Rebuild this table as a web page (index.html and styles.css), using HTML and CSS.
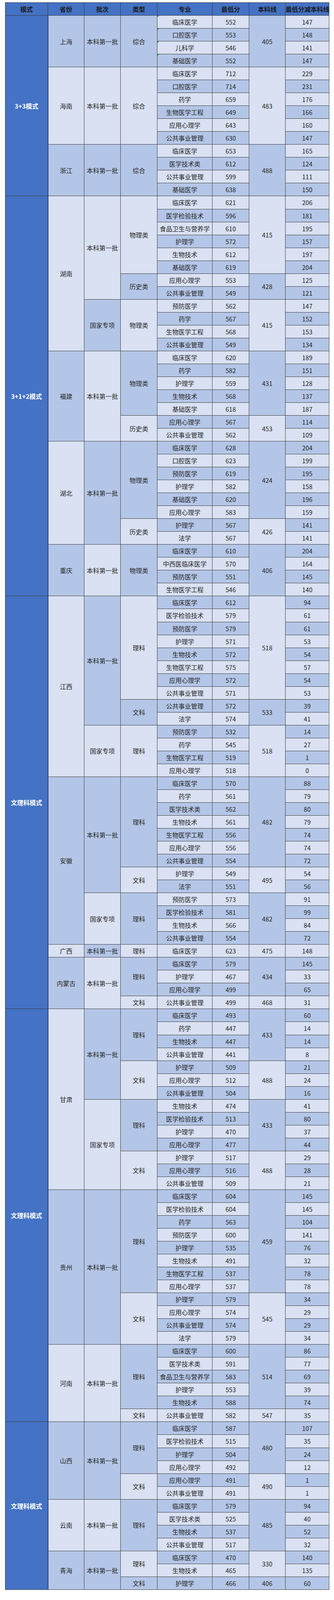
FILE: index.html
```html
<!DOCTYPE html>
<html lang="zh-CN">
<head>
<meta charset="utf-8">
<title>录取分数</title>
<link rel="stylesheet" href="styles.css">
</head>
<body>
<div class="wrap">
<table class="t">
<colgroup>
<col class="c-mode"><col class="c-prov"><col class="c-batch"><col class="c-type"><col class="c-major"><col class="c-min"><col class="c-line"><col class="c-diff">
</colgroup>
<thead>
<tr><th>模式</th><th>省份</th><th>批次</th><th>类型</th><th>专业</th><th>最低分</th><th>本科线</th><th>最低分减本科线</th></tr>
</thead>
<tbody>
<tr class="o"><td class="mode" rowspan="14">3+3模式</td><td class="b" rowspan="4">上海</td><td class="b" rowspan="4">本科第一批</td><td class="b" rowspan="4">综合</td><td class="tri">临床医学</td><td>552</td><td class="b" rowspan="4">405</td><td>147</td></tr>
<tr class="e"><td class="tri">口腔医学</td><td>553</td><td>148</td></tr>
<tr class="o"><td class="tri">儿科学</td><td>546</td><td>141</td></tr>
<tr class="e"><td class="tri">基础医学</td><td>552</td><td>147</td></tr>
<tr class="o"><td class="a" rowspan="6">海南</td><td class="a" rowspan="6">本科第一批</td><td class="a" rowspan="6">综合</td><td>临床医学</td><td>712</td><td class="a" rowspan="6">483</td><td>229</td></tr>
<tr class="e"><td>口腔医学</td><td>714</td><td>231</td></tr>
<tr class="o"><td>药学</td><td>659</td><td>176</td></tr>
<tr class="e"><td>生物医学工程</td><td>649</td><td>166</td></tr>
<tr class="o"><td>应用心理学</td><td>643</td><td>160</td></tr>
<tr class="e"><td>公共事业管理</td><td>630</td><td>147</td></tr>
<tr class="o"><td class="b" rowspan="4">浙江</td><td class="b" rowspan="4">本科第一批</td><td class="b" rowspan="4">综合</td><td>临床医学</td><td>653</td><td class="b" rowspan="4">488</td><td>165</td></tr>
<tr class="e"><td>医学技术类</td><td>612</td><td>124</td></tr>
<tr class="o"><td>公共事业管理</td><td>599</td><td>111</td></tr>
<tr class="e"><td>基础医学</td><td>638</td><td>150</td></tr>

<tr class="o"><td class="mode" rowspan="31">3+1+2模式</td><td class="a" rowspan="12">湖南</td><td class="a" rowspan="8">本科第一批</td><td class="a" rowspan="6">物理类</td><td>临床医学</td><td>621</td><td class="a" rowspan="6">415</td><td>206</td></tr>
<tr class="e"><td>医学检验技术</td><td>596</td><td>181</td></tr>
<tr class="o"><td>食品卫生与营养学</td><td>610</td><td>195</td></tr>
<tr class="e"><td>护理学</td><td>572</td><td>157</td></tr>
<tr class="o"><td>生物技术</td><td>612</td><td>197</td></tr>
<tr class="e"><td>基础医学</td><td>619</td><td>204</td></tr>
<tr class="o"><td class="b" rowspan="2">历史类</td><td>应用心理学</td><td>553</td><td class="b" rowspan="2">428</td><td>125</td></tr>
<tr class="e"><td>公共事业管理</td><td>549</td><td>121</td></tr>
<tr class="o"><td class="b" rowspan="4">国家专项</td><td class="a" rowspan="4">物理类</td><td>预防医学</td><td>562</td><td class="a" rowspan="4">415</td><td>147</td></tr>
<tr class="e"><td>药学</td><td>567</td><td>152</td></tr>
<tr class="o"><td>生物医学工程</td><td>568</td><td>153</td></tr>
<tr class="e"><td>公共事业管理</td><td>549</td><td>134</td></tr>
<tr class="o"><td class="b" rowspan="7">福建</td><td class="a" rowspan="7">本科第一批</td><td class="b" rowspan="5">物理类</td><td>临床医学</td><td>620</td><td class="b" rowspan="5">431</td><td>189</td></tr>
<tr class="e"><td>药学</td><td>582</td><td>151</td></tr>
<tr class="o"><td>护理学</td><td>559</td><td>128</td></tr>
<tr class="e"><td>生物技术</td><td>568</td><td>137</td></tr>
<tr class="o"><td>基础医学</td><td>618</td><td>187</td></tr>
<tr class="e"><td class="a" rowspan="2">历史类</td><td>应用心理学</td><td>567</td><td class="a" rowspan="2">453</td><td>114</td></tr>
<tr class="o"><td>公共事业管理</td><td>562</td><td>109</td></tr>
<tr class="e"><td class="a" rowspan="8">湖北</td><td class="b" rowspan="8">本科第一批</td><td class="b" rowspan="6">物理类</td><td>临床医学</td><td>628</td><td class="b" rowspan="6">424</td><td>204</td></tr>
<tr class="o"><td>口腔医学</td><td>623</td><td>199</td></tr>
<tr class="e"><td>预防医学</td><td>619</td><td>195</td></tr>
<tr class="o"><td>护理学</td><td>582</td><td>158</td></tr>
<tr class="e"><td>基础医学</td><td>620</td><td>196</td></tr>
<tr class="o"><td>应用心理学</td><td>583</td><td>159</td></tr>
<tr class="e"><td class="a" rowspan="2">历史类</td><td>护理学</td><td>567</td><td class="a" rowspan="2">426</td><td>141</td></tr>
<tr class="o"><td>法学</td><td>567</td><td>141</td></tr>
<tr class="e"><td class="b" rowspan="4">重庆</td><td class="a" rowspan="4">本科第一批</td><td class="b" rowspan="4">物理类</td><td>临床医学</td><td>610</td><td class="b" rowspan="4">406</td><td>204</td></tr>
<tr class="o"><td>中西医临床医学</td><td>570</td><td>164</td></tr>
<tr class="e"><td>预防医学</td><td>551</td><td>145</td></tr>
<tr class="o"><td>生物医学工程</td><td>546</td><td>140</td></tr>

<tr class="e"><td class="mode" rowspan="32">文理科模式</td><td class="a" rowspan="14">江西</td><td class="b" rowspan="10">本科第一批</td><td class="a" rowspan="8">理科</td><td>临床医学</td><td>612</td><td class="a" rowspan="8">518</td><td>94</td></tr>
<tr class="o"><td>医学检验技术</td><td>579</td><td>61</td></tr>
<tr class="e"><td>预防医学</td><td>579</td><td>61</td></tr>
<tr class="o"><td>护理学</td><td>571</td><td>53</td></tr>
<tr class="e"><td>生物技术</td><td>572</td><td>54</td></tr>
<tr class="o"><td>生物医学工程</td><td>575</td><td>57</td></tr>
<tr class="e"><td>应用心理学</td><td>572</td><td>54</td></tr>
<tr class="o"><td>公共事业管理</td><td>571</td><td>53</td></tr>
<tr class="e"><td class="b" rowspan="2">文科</td><td>公共事业管理</td><td>572</td><td class="b" rowspan="2">533</td><td>39</td></tr>
<tr class="o"><td>法学</td><td>574</td><td>41</td></tr>
<tr class="e"><td class="a" rowspan="4">国家专项</td><td class="a" rowspan="4">理科</td><td>预防医学</td><td>532</td><td class="a" rowspan="4">518</td><td>14</td></tr>
<tr class="o"><td>药学</td><td>545</td><td>27</td></tr>
<tr class="e"><td>生物医学工程</td><td>519</td><td>1</td></tr>
<tr class="o"><td>应用心理学</td><td>518</td><td>0</td></tr>
<tr class="e"><td class="b" rowspan="13">安徽</td><td class="b" rowspan="9">本科第一批</td><td class="b" rowspan="7">理科</td><td>临床医学</td><td>570</td><td class="b" rowspan="7">482</td><td>88</td></tr>
<tr class="o"><td>药学</td><td>561</td><td>79</td></tr>
<tr class="e"><td>医学技术类</td><td>562</td><td>80</td></tr>
<tr class="o"><td>生物技术</td><td>561</td><td>79</td></tr>
<tr class="e"><td>生物医学工程</td><td>556</td><td>74</td></tr>
<tr class="o"><td>应用心理学</td><td>556</td><td>74</td></tr>
<tr class="e"><td>公共事业管理</td><td>554</td><td>72</td></tr>
<tr class="o"><td class="a" rowspan="2">文科</td><td>护理学</td><td>549</td><td class="a" rowspan="2">495</td><td>54</td></tr>
<tr class="e"><td>法学</td><td>551</td><td>56</td></tr>
<tr class="o"><td class="a" rowspan="4">国家专项</td><td class="b" rowspan="4">理科</td><td>预防医学</td><td>573</td><td class="b" rowspan="4">482</td><td>91</td></tr>
<tr class="e"><td>医学检验技术</td><td>581</td><td>99</td></tr>
<tr class="o"><td>生物技术</td><td>566</td><td>84</td></tr>
<tr class="e"><td>公共事业管理</td><td>554</td><td>72</td></tr>
<tr class="o"><td class="a">广西</td><td class="b">本科第一批</td><td class="a">理科</td><td>临床医学</td><td>623</td><td class="a">475</td><td>148</td></tr>
<tr class="e"><td class="b" rowspan="4">内蒙古</td><td class="a" rowspan="4">本科第一批</td><td class="b" rowspan="3">理科</td><td>临床医学</td><td>579</td><td class="b" rowspan="3">434</td><td>145</td></tr>
<tr class="o"><td>护理学</td><td>467</td><td>33</td></tr>
<tr class="e"><td>应用心理学</td><td>499</td><td>65</td></tr>
<tr class="o"><td class="a">文科</td><td>公共事业管理</td><td>499</td><td class="a">468</td><td>31</td></tr>

<tr class="e"><td class="mode" rowspan="32">文理科模式</td><td class="a" rowspan="14">甘肃</td><td class="b" rowspan="7">本科第一批</td><td class="b" rowspan="4">理科</td><td>临床医学</td><td>493</td><td class="b" rowspan="4">433</td><td>60</td></tr>
<tr class="o"><td>药学</td><td>447</td><td>14</td></tr>
<tr class="e"><td>生物技术</td><td>447</td><td>14</td></tr>
<tr class="o"><td>公共事业管理</td><td>441</td><td>8</td></tr>
<tr class="e"><td class="a" rowspan="3">文科</td><td>护理学</td><td>509</td><td class="a" rowspan="3">488</td><td>21</td></tr>
<tr class="o"><td>应用心理学</td><td>512</td><td>24</td></tr>
<tr class="e"><td>公共事业管理</td><td>504</td><td>16</td></tr>
<tr class="o"><td class="a" rowspan="7">国家专项</td><td class="b" rowspan="4">理科</td><td>生物技术</td><td>474</td><td class="b" rowspan="4">433</td><td>41</td></tr>
<tr class="e"><td>医学检验技术</td><td>513</td><td>80</td></tr>
<tr class="o"><td>护理学</td><td>470</td><td>37</td></tr>
<tr class="e"><td>应用心理学</td><td>477</td><td>44</td></tr>
<tr class="o"><td class="a" rowspan="3">文科</td><td>护理学</td><td>517</td><td class="a" rowspan="3">488</td><td>29</td></tr>
<tr class="e"><td>应用心理学</td><td>516</td><td>28</td></tr>
<tr class="o"><td>公共事业管理</td><td>509</td><td>21</td></tr>
<tr class="e"><td class="b" rowspan="12">贵州</td><td class="b" rowspan="12">本科第一批</td><td class="b" rowspan="8">理科</td><td>临床医学</td><td>604</td><td class="b" rowspan="8">459</td><td>145</td></tr>
<tr class="o"><td>医学检验技术</td><td>604</td><td>145</td></tr>
<tr class="e"><td>药学</td><td>563</td><td>104</td></tr>
<tr class="o"><td>预防医学</td><td>600</td><td>141</td></tr>
<tr class="e"><td>护理学</td><td>535</td><td>76</td></tr>
<tr class="o"><td>生物技术</td><td>491</td><td>32</td></tr>
<tr class="e"><td>生物医学工程</td><td>537</td><td>78</td></tr>
<tr class="o"><td>应用心理学</td><td>537</td><td>78</td></tr>
<tr class="e"><td class="a" rowspan="4">文科</td><td>护理学</td><td>579</td><td class="a" rowspan="4">545</td><td>34</td></tr>
<tr class="o"><td>应用心理学</td><td>574</td><td>29</td></tr>
<tr class="e"><td>公共事业管理</td><td>574</td><td>29</td></tr>
<tr class="o"><td>法学</td><td>579</td><td>34</td></tr>
<tr class="e"><td class="a" rowspan="6">河南</td><td class="a" rowspan="6">本科第一批</td><td class="b" rowspan="5">理科</td><td>临床医学</td><td>600</td><td class="b" rowspan="5">514</td><td>86</td></tr>
<tr class="o"><td>医学技术类</td><td>591</td><td>77</td></tr>
<tr class="e"><td>食品卫生与营养学</td><td>583</td><td>69</td></tr>
<tr class="o"><td>护理学</td><td>553</td><td>39</td></tr>
<tr class="e"><td>生物技术</td><td>588</td><td>74</td></tr>
<tr class="o"><td class="a">文科</td><td>公共事业管理</td><td>582</td><td class="a">547</td><td>35</td></tr>

<tr class="e"><td class="mode" rowspan="13">文理科模式</td><td class="b" rowspan="6">山西</td><td class="b" rowspan="6">本科第一批</td><td class="b" rowspan="4">理科</td><td>临床医学</td><td>587</td><td class="b" rowspan="4">480</td><td>107</td></tr>
<tr class="o"><td>医学检验技术</td><td>515</td><td>35</td></tr>
<tr class="e"><td>护理学</td><td>504</td><td>24</td></tr>
<tr class="o"><td>应用心理学</td><td>492</td><td>12</td></tr>
<tr class="e"><td class="a" rowspan="2">文科</td><td>应用心理学</td><td>491</td><td class="a" rowspan="2">490</td><td>1</td></tr>
<tr class="o"><td>公共事业管理</td><td>491</td><td>1</td></tr>
<tr class="e"><td class="a" rowspan="4">云南</td><td class="a" rowspan="4">本科第一批</td><td class="b" rowspan="4">理科</td><td>临床医学</td><td>579</td><td class="b" rowspan="4">485</td><td>94</td></tr>
<tr class="o"><td>医学技术类</td><td>525</td><td>40</td></tr>
<tr class="e"><td>生物技术</td><td>537</td><td>52</td></tr>
<tr class="o"><td>公共事业管理</td><td>517</td><td>32</td></tr>
<tr class="e"><td class="b" rowspan="3">青海</td><td class="b" rowspan="3">本科第一批</td><td class="a" rowspan="2">理科</td><td>临床医学</td><td>470</td><td class="a" rowspan="2">330</td><td>140</td></tr>
<tr class="o"><td>生物技术</td><td>465</td><td>135</td></tr>
<tr class="e"><td class="b">文科</td><td>护理学</td><td>466</td><td class="b">406</td><td>60</td></tr>
</tbody>
</table>
</div>
</body>
</html>
```
FILE: styles.css
```css
html, body {
  margin: 0;
  padding: 0;
  background: #ffffff;
}

body {
  font-family: "Noto Sans CJK SC", "Noto Sans", sans-serif;
  color: #262626;
}

.wrap {
  padding: 6px 0 0 13px;
}

.t {
  border-collapse: collapse;
  table-layout: fixed;
  width: 829px;
}

.c-mode { width: 109px; }
.c-prov { width: 93px; }
.c-batch { width: 93px; }
.c-type { width: 94px; }
.c-major { width: 141px; }
.c-min { width: 94px; }
.c-line { width: 93px; }
.c-diff { width: 112px; }

.t th,
.t td {
  height: 32.04px;
  padding: 0;
  border: 1px solid #3a3a3a;
  text-align: center;
  vertical-align: middle;
  font-size: 16px;
  line-height: 20px;
  white-space: nowrap;
  overflow: visible;
}

.t th {
  background: #4472c4;
  color: #1a1a1a;
  font-weight: 700;
}

.o td { background: #d9e1f2; }
.e td { background: #b4c6e7; }

.t td.a { background: #d9e1f2; }
.t td.b { background: #b4c6e7; }

.t td.mode {
  background: #4472c4;
  color: #ffffff;
  font-weight: 700;
  border-right: 2px solid #2b3f66;
}

.t td.tri {
  position: relative;
}

.t td.tri::before {
  content: "";
  position: absolute;
  left: 0;
  top: 0;
  border-style: solid;
  border-width: 4px 4px 0 0;
  border-color: #1e9a3a transparent transparent transparent;
}
```
